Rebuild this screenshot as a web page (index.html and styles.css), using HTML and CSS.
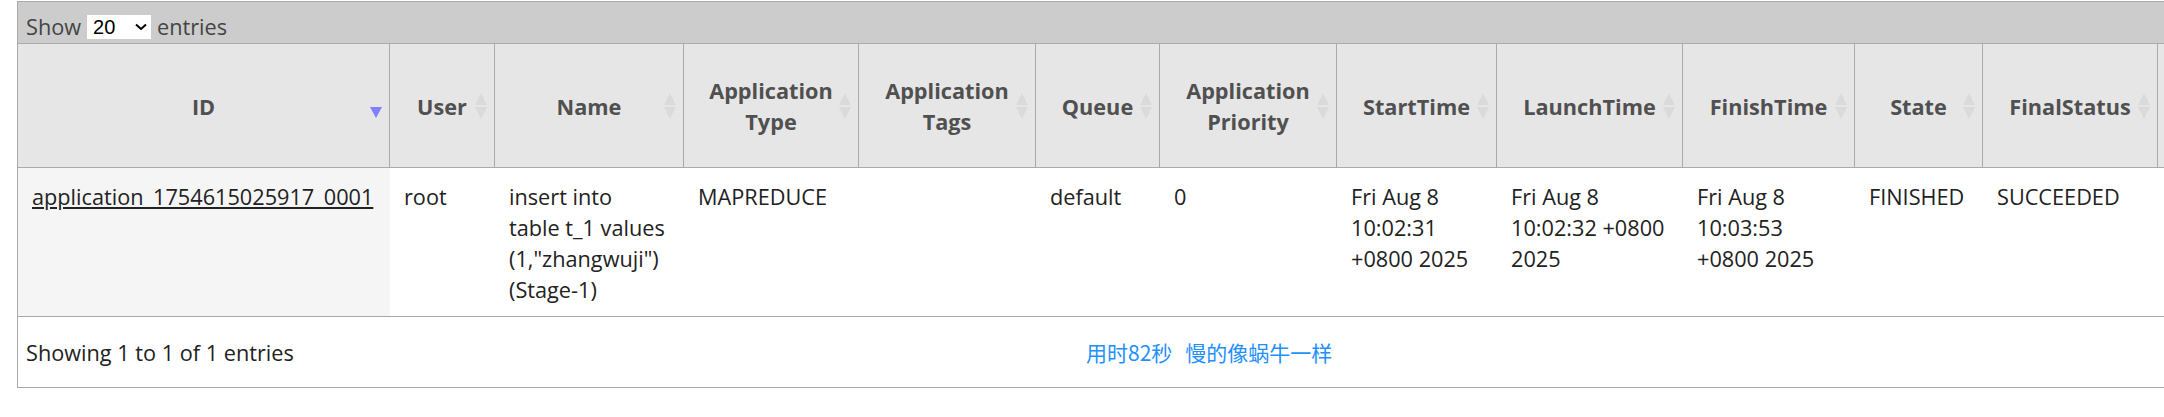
FILE: index.html
```html
<!DOCTYPE html>
<html lang="en">
<head>
    <meta charset="utf-8" />
    <link rel="stylesheet" href="styles.css">
    <title>All Applications</title>
</head>
<body>
    <div class="apps_wrapper">
        <div class="apps_length">
            <span>Show</span>
            <span class="lenselect">20
                <svg width="14" height="8" viewBox="0 0 14 8"><polyline points="2,1.5 7,6 12,1.5" fill="none" stroke="#000" stroke-width="2" /></svg>
            </span>
            <span>entries</span>
        </div>
        <table class="apps">
            <colgroup>
                <col class="c-id">
                <col class="c-user">
                <col class="c-name">
                <col class="c-type">
                <col class="c-tags">
                <col class="c-queue">
                <col class="c-prio">
                <col class="c-start">
                <col class="c-launch">
                <col class="c-finish">
                <col class="c-state">
                <col class="c-final">
                <col class="c-more">
            </colgroup>
            <thead>
                <tr>
                    <th class="sorting_desc">ID</th>
                    <th>User</th>
                    <th>Name</th>
                    <th>Application Type</th>
                    <th>Application Tags</th>
                    <th>Queue</th>
                    <th>Application Priority</th>
                    <th>StartTime</th>
                    <th>LaunchTime</th>
                    <th>FinishTime</th>
                    <th>State</th>
                    <th>FinalStatus</th>
                    <th></th>
                </tr>
            </thead>
            <tbody>
                <tr>
                    <td class="sorting_1"><a href="#">application_1754615025917_0001</a></td>
                    <td>root</td>
                    <td>insert into<br>table t_1 values<br>(1,"zhangwuji")<br>(Stage-1)</td>
                    <td>MAPREDUCE</td>
                    <td></td>
                    <td>default</td>
                    <td>0</td>
                    <td>Fri Aug 8<br>10:02:31<br>+0800 2025</td>
                    <td>Fri Aug 8<br>10:02:32 +0800<br>2025</td>
                    <td>Fri Aug 8<br>10:03:53<br>+0800 2025</td>
                    <td>FINISHED</td>
                    <td>SUCCEEDED</td>
                    <td></td>
                </tr>
            </tbody>
        </table>
        <div class="apps_footer">
            <div class="apps_info">Showing 1 to 1 of 1 entries</div>
            <div class="slow"><span>用时82秒</span><span>慢的像蜗牛一样</span></div>
        </div>
    </div>
</body>
</html>
```
FILE: styles.css
```css
body {
    margin: 0;
    background: #fff;
    color: #222;
    font-family: "Open Sans", "Noto Sans", sans-serif;
    font-size: 21.7px;
}

.apps_wrapper {
    margin: 1px 0 0 17px;
    border-top: 1px solid #aaa;
    border-left: 1px solid #aaa;
    overflow: hidden;
}

.apps_length {
    display: flex;
    align-items: center;
    gap: 6px;
    height: 30px;
    padding: 10px 0 1px 8px;
    background: #ccc;
    border-bottom: 1px solid #aaa;
    color: #444;
    line-height: 30px;
}

.lenselect {
    display: flex;
    align-items: center;
    justify-content: space-between;
    box-sizing: border-box;
    width: 64px;
    height: 24px;
    padding: 0 3px 0 6px;
    background: #fff;
    color: #000;
    font-family: "Liberation Sans", Arial, sans-serif;
    font-size: 20px;
}

table.apps {
    border-collapse: separate;
    border-spacing: 0;
    table-layout: fixed;
    width: 2340px;
}

.c-id { width: 372px; }
.c-user { width: 105px; }
.c-name { width: 189px; }
.c-type { width: 175px; }
.c-tags { width: 177px; }
.c-queue { width: 124px; }
.c-prio { width: 177px; }
.c-start { width: 160px; }
.c-launch { width: 186px; }
.c-finish { width: 172px; }
.c-state { width: 128px; }
.c-final { width: 175px; }
.c-more { width: 200px; }

table.apps th {
    position: relative;
    padding: 31px 22px 30px;
    background: #e6e6e6;
    border-right: 1px solid #aaa;
    border-bottom: 1px solid #aaa;
    color: #505050;
    font-weight: 700;
    line-height: 31px;
    text-align: center;
    vertical-align: middle;
}

/* sort arrows */
table.apps th::before,
table.apps th::after {
    content: "";
    position: absolute;
    right: 7px;
    width: 0;
    height: 0;
    border-left: 6.5px solid transparent;
    border-right: 6.5px solid transparent;
}

table.apps th::before {
    top: calc(50% - 13px);
    border-bottom: 12px solid #dadada;
}

table.apps th::after {
    top: calc(50% + 1px);
    border-top: 12px solid #dadada;
}

table.apps th.sorting_desc::before {
    display: none;
}

table.apps th.sorting_desc::after {
    border-top: 11px solid #8080ff;
}

table.apps td {
    padding: 13px 17px 11px 14px;
    border-bottom: 1px solid #aaa;
    line-height: 31px;
    vertical-align: top;
    white-space: nowrap;
}

table.apps td.sorting_1 {
    background: #f5f5f5;
}

table.apps td a {
    color: #222;
}

.apps_footer {
    display: flex;
    align-items: center;
    height: 70px;
    padding-left: 8px;
    border-bottom: 1px solid #aaa;
}

.apps_info {
    width: 1060px;
}

.slow {
    display: flex;
    gap: 13px;
    color: #1e90ff;
    font-family: "Noto Sans CJK SC", sans-serif;
    font-size: 21px;
}
```
